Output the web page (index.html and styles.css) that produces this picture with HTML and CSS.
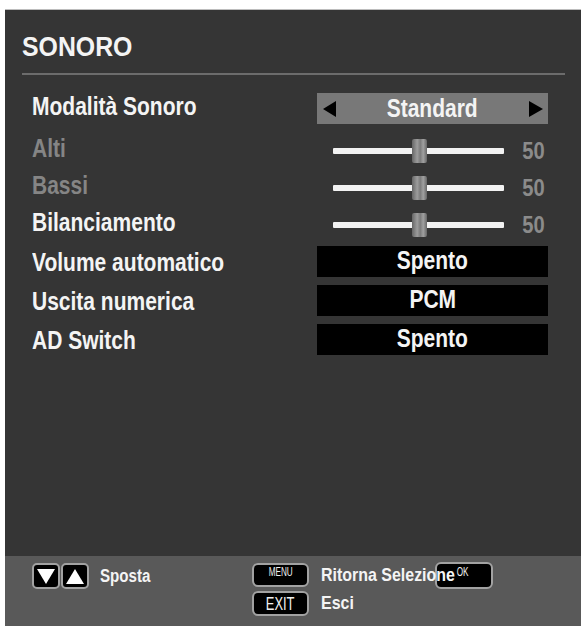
FILE: index.html
```html
<!DOCTYPE html>
<html lang="it">
<head>
    <meta charset="UTF-8">
    <meta name="viewport" content="width=device-width, initial-scale=1.0">
    <title>Sonoro</title>
    <link rel="stylesheet" href="styles.css">
</head>
<body>
    <div class="panel">
        <div class="header">
            <h1 class="title"><span class="title-text">SONORO</span></h1>
        </div>

        <div class="rows">
            <div class="row row-select">
                <span class="label">Modalità Sonoro</span>
                <div class="value select">
                    <span class="arrow arrow-left"></span>
                    <span class="narrow">Standard</span>
                    <span class="arrow arrow-right"></span>
                </div>
            </div>

            <div class="row row-slider">
                <span class="label disabled">Alti</span>
                <div class="value slider">
                    <div class="track"><span class="thumb" style="left: 50%"></span></div>
                    <span class="num"><span class="narrow">50</span></span>
                </div>
            </div>

            <div class="row row-slider">
                <span class="label disabled">Bassi</span>
                <div class="value slider">
                    <div class="track"><span class="thumb" style="left: 50%"></span></div>
                    <span class="num"><span class="narrow">50</span></span>
                </div>
            </div>

            <div class="row row-slider">
                <span class="label">Bilanciamento</span>
                <div class="value slider">
                    <div class="track"><span class="thumb" style="left: 50%"></span></div>
                    <span class="num"><span class="narrow">50</span></span>
                </div>
            </div>

            <div class="row row-box first-box">
                <span class="label">Volume automatico</span>
                <div class="value box"><span class="narrow">Spento</span></div>
            </div>

            <div class="row row-box">
                <span class="label">Uscita numerica</span>
                <div class="value box"><span class="narrow">PCM</span></div>
            </div>

            <div class="row row-box">
                <span class="label">AD Switch</span>
                <div class="value box"><span class="narrow">Spento</span></div>
            </div>
        </div>

        <div class="footer">
            <div class="hint-move">
                <span class="key key-arrow"><span class="tri tri-down"></span></span>
                <span class="key key-arrow"><span class="tri tri-up"></span></span>
                <span class="hint-text">Sposta</span>
            </div>
            <div class="hint-grid">
                <span class="key key-menu"><span class="thin">MENU</span></span>
                <span class="hint-text over">Ritorna Selezione</span>
                <span class="key key-ok"><span class="thin">OK</span></span>

                <span class="key key-exit"><span class="thin">EXIT</span></span>
                <span class="hint-text">Esci</span>
            </div>
        </div>
    </div>
</body>
</html>
```

FILE: styles.css
```css
body {
    margin: 0;
    background-color: #fff;
    font-family: 'Liberation Sans', Arial, sans-serif;
    color: #f4f4f4;
}

.panel {
    margin: 9px 0 0 5px;
    height: 617px;
    background-color: #353535;
    display: flex;
    flex-direction: column;
    border-top: 1px solid #bdbdbd;
    box-sizing: border-box;
}

.header {
    padding: 22px 16px 0 17px;
}

.title {
    margin: 0;
    font-size: 27px;
    line-height: 31px;
    font-weight: bold;
    padding-bottom: 10px;
    border-bottom: 2px solid #6c6c6c;
}

.title-text {
    display: inline-block;
    transform: scaleX(0.92);
    transform-origin: left center;
}

/* the OSD font is a condensed grotesk: squeeze Liberation Sans */
.narrow,
.label,
.hint-text {
    display: inline-block;
    transform: scaleX(0.84);
}

.label,
.hint-text {
    transform-origin: left center;
    white-space: nowrap;
}

.rows {
    padding: 18px 33px 0 27px;
    display: flex;
    flex-direction: column;
    flex: 1;
}

.row {
    display: flex;
    align-items: center;
    justify-content: space-between;
}

.label {
    font-size: 25px;
    font-weight: bold;
    line-height: 28px;
}

.label.disabled {
    color: #858585;
}

.row-select .label,
.row-slider .label {
    margin-bottom: 5px;
}

.value {
    width: 231px;
    box-sizing: border-box;
}

.row-select {
    height: 31px;
    margin-bottom: 8px;
}

.select {
    height: 31px;
    background-color: #787878;
    display: flex;
    align-items: center;
    justify-content: space-between;
    padding: 0 5px 0 6px;
    font-size: 25px;
    font-weight: bold;
}

.arrow {
    width: 0;
    height: 0;
    border-top: 8px solid transparent;
    border-bottom: 8px solid transparent;
}

.arrow-left {
    border-right: 13px solid #000;
}

.arrow-right {
    border-left: 14px solid #000;
}

.row-slider {
    height: 37px;
}

.slider {
    display: flex;
    align-items: center;
    padding-left: 16px;
}

.track {
    position: relative;
    width: 171px;
    height: 6px;
    background-color: #f2f2f2;
    border-radius: 1px;
}

.thumb {
    position: absolute;
    top: -9px;
    width: 15px;
    height: 24px;
    margin-left: -7px;
    border-radius: 2px;
    background: linear-gradient(to right, #666, #9c9c9c 35%, #7b7b7b 55%, #a0a0a0 75%, #666);
}

.num {
    flex: 1;
    text-align: right;
    padding-right: 3px;
    font-size: 24px;
    font-weight: bold;
    color: #8b8b8b;
}

.num .narrow {
    transform-origin: right center;
}

.row-box {
    height: 31px;
    margin-top: 8px;
}

.row-box.first-box {
    margin-top: 3px;
}

.box {
    height: 31px;
    background-color: #000;
    text-align: center;
    font-size: 25px;
    font-weight: bold;
    line-height: 29px;
}

.footer {
    height: 70px;
    background-color: #595959;
    display: flex;
    padding: 7px 0 0 27px;
    box-sizing: border-box;
}

.hint-move {
    width: 220px;
    display: flex;
    align-items: flex-start;
}

.key {
    background-color: #000;
    border: 2px solid #a2a2a2;
    border-radius: 6px;
    box-sizing: border-box;
    color: #f0f0f0;
}

.key-arrow {
    width: 28px;
    height: 26px;
    margin-right: 1px;
    display: flex;
    align-items: center;
    justify-content: center;
    border-radius: 5px;
}

.tri {
    width: 0;
    height: 0;
    border-left: 9px solid transparent;
    border-right: 9px solid transparent;
}

.tri-down {
    border-top: 15px solid #fff;
}

.tri-up {
    border-bottom: 15px solid #fff;
}

.hint-text {
    font-size: 19px;
    font-weight: bold;
    line-height: 26px;
}

.hint-move .hint-text {
    margin-left: 10px;
    font-size: 18px;
}

.hint-grid {
    display: grid;
    grid-template-columns: 57px 102px 58px;
    grid-template-rows: 24px 25px;
    column-gap: 12px;
    row-gap: 4px;
    align-items: start;
}

.hint-grid .hint-text {
    line-height: 24px;
}

.over {
    position: relative;
    z-index: 1;
}

.thin {
    display: inline-block;
    transform: scaleX(0.68);
}

.key-menu {
    height: 24px;
    font-size: 12px;
    text-align: center;
    line-height: 12px;
    padding-top: 1px;
}

.key-ok {
    height: 27px;
    margin-top: -1px;
    font-size: 12px;
    line-height: 12px;
    padding: 2px 0 0 17px;
}

.key-exit {
    height: 25px;
    text-align: center;
    font-size: 19px;
    line-height: 21px;
}
```
